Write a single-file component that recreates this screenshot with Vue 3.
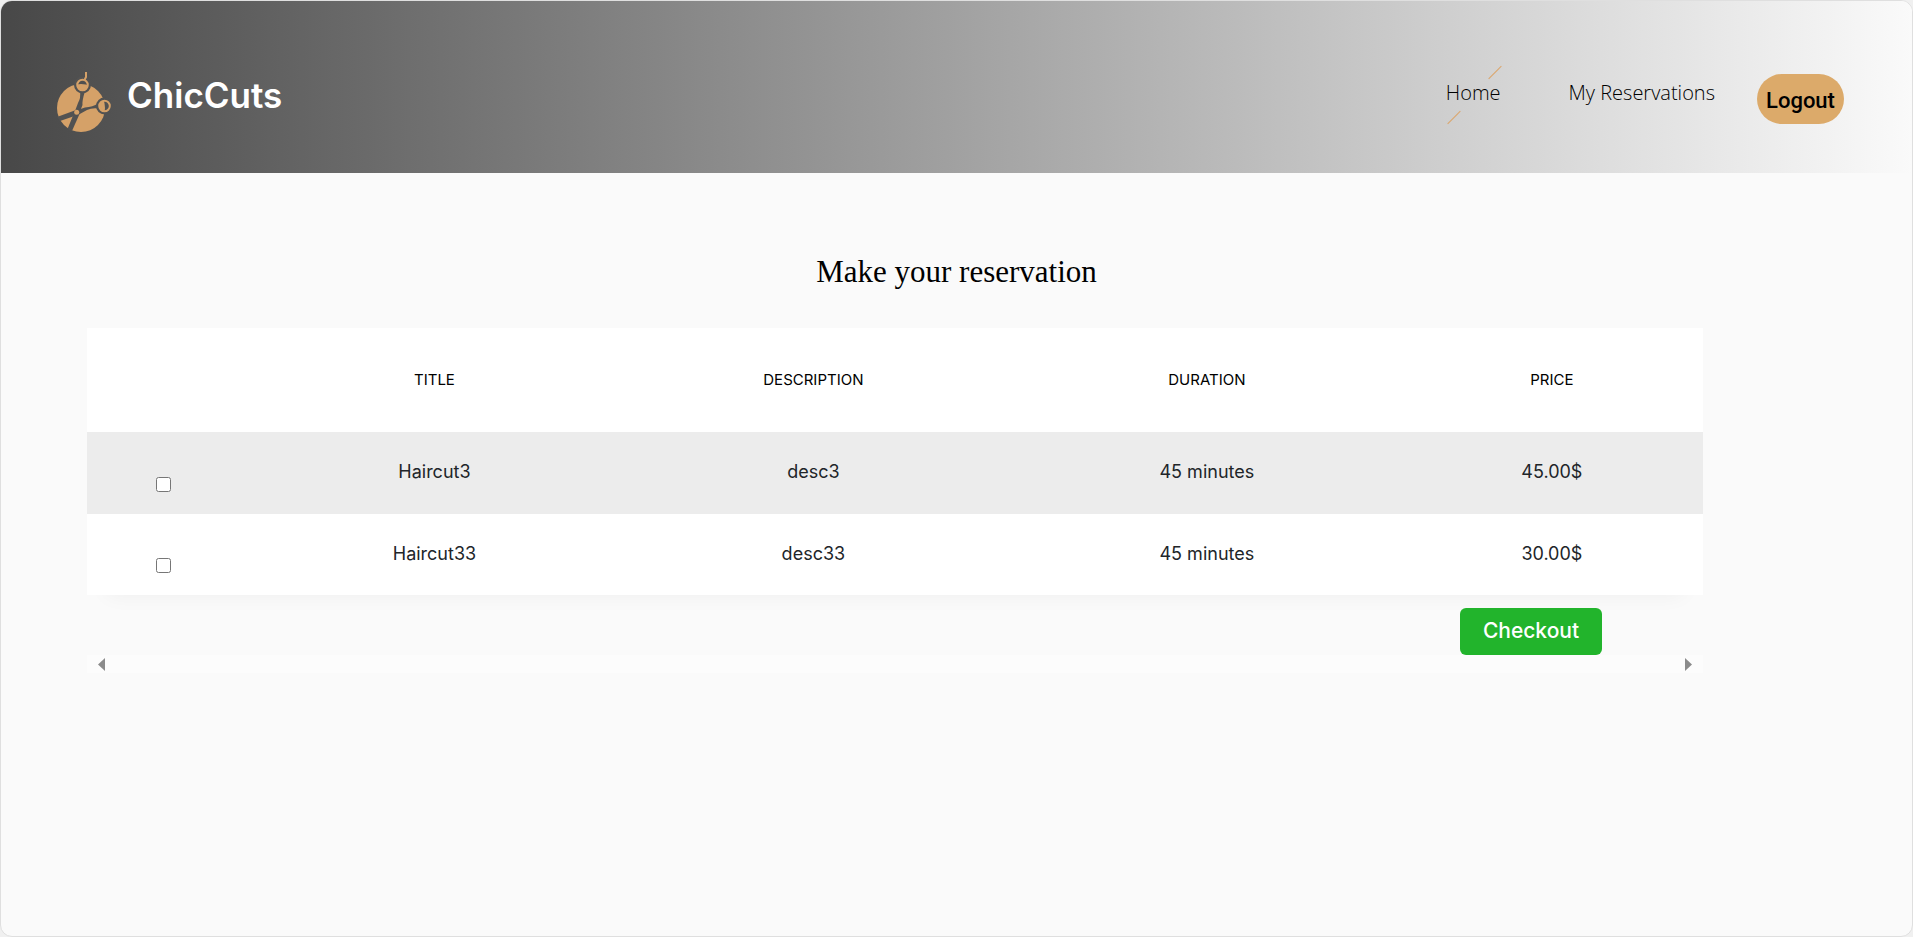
<script setup>
import { ref } from 'vue'

const services = ref([
  { id: 3, title: 'Haircut3', description: 'desc3', duration: '45 minutes', price: '45.00$', selected: false },
  { id: 33, title: 'Haircut33', description: 'desc33', duration: '45 minutes', price: '30.00$', selected: false },
])
</script>

<template>
  <div class="page">
    <header class="header">
      <a class="brand" href="#">
        <svg class="logo" viewBox="0 0 54 60" aria-hidden="true">
          <circle cx="24" cy="36" r="24" fill="#d5a168" />
          <g fill="#525252">
            <path d="M23 19 L28 19 Q25 29 25.500 33 L22 42 L18 39 L21 31 Q24 26 23 19 Z" />
            <path d="M41 31.500 L42 36.500 Q35 35.500 30 38 L21 43 L19 38.500 L28 35.500 Q36 35 41 31.500 Z" />
            <path d="M17.500 40 L22.500 42 L15 59 L10.500 57 Z" />
            <path d="M19 38 L20.500 43 L3 49 L0 45 Z" />
          </g>
          <g fill="none" stroke="#525252" stroke-width="3">
            <circle cx="25.500" cy="13" r="7" />
            <circle cx="47.500" cy="34" r="7" />
          </g>
          <circle cx="19.700" cy="40.300" r="2.500" fill="#d5a168" />
          <g fill="none" stroke="#d5a168" stroke-width="2">
            <circle cx="25.500" cy="13" r="5.300" />
            <circle cx="47.500" cy="34" r="5.300" />
            <path d="M27.500 8 L29 5 L29 0" />
          </g>
        </svg>
        <span class="brand-name">ChicCuts</span>
      </a>
      <nav class="nav">
        <a class="nav-link active" href="#">Home</a>
        <a class="nav-link" href="#">My Reservations</a>
        <button class="logout" type="button">Logout</button>
      </nav>
    </header>

    <main>
      <h1 class="title">Make your reservation</h1>
      <section class="reservation">
        <table class="services">
          <colgroup>
            <col class="col-check" /><col class="col-title" /><col class="col-description" />
            <col class="col-duration" /><col class="col-price" />
          </colgroup>
          <thead>
            <tr>
              <th></th>
              <th>TITLE</th>
              <th>DESCRIPTION</th>
              <th>DURATION</th>
              <th>PRICE</th>
            </tr>
          </thead>
          <tbody>
            <tr v-for="s in services" :key="s.id">
              <td class="check"><input v-model="s.selected" type="checkbox" :aria-label="s.title" /></td>
              <td>{{ s.title }}</td>
              <td>{{ s.description }}</td>
              <td>{{ s.duration }}</td>
              <td>{{ s.price }}</td>
            </tr>
          </tbody>
        </table>
        <div class="actions">
          <button class="checkout" type="button">Checkout</button>
        </div>
        <div class="scroll-track" aria-hidden="true">
          <svg viewBox="0 0 7 13"><path d="M7 0 V13 L0 6.500 Z" fill="#8b8b8b" /></svg>
          <svg viewBox="0 0 7 13"><path d="M0 0 V13 L7 6.500 Z" fill="#8b8b8b" /></svg>
        </div>
      </section>
    </main>
  </div>
</template>

<style>
body {
  background: #f0f0f0;
}
</style>

<style scoped>
.page {
  box-sizing: border-box;
  min-height: 100vh;
  border: 1px solid #dfdfdf;
  border-radius: 12px;
  overflow: hidden;
  background: #fafafa;
  font-family: Inter, "Open Sans", sans-serif;
}
.header {
  box-sizing: border-box;
  height: 172px;
  display: flex;
  justify-content: space-between;
  align-items: flex-start;
  padding: 71px 68px 0 56px;
  background: linear-gradient(to right, #484848, #fafafa);
}
.brand {
  display: flex;
  gap: 16px;
  text-decoration: none;
}
.logo {
  width: 54px;
  height: 60px;
}
.brand-name {
  color: #fff;
  font-size: 35px;
  font-weight: 600;
  line-height: 46px;
}
.nav {
  display: flex;
  align-items: flex-start;
}
.nav-link {
  position: relative;
  margin-right: 68px;
  color: #000;
  font: 300 20px/42px "Open Sans", sans-serif;
  text-decoration: none;
}
.nav-link + .nav-link {
  margin-right: 42px;
}
.active::before,
.active::after {
  content: "";
  position: absolute;
  width: 18px;
  height: 1px;
  background: #dba56a;
  transform: rotate(-45deg);
}
.active::before {
  top: 0;
  right: -3px;
}
.active::after {
  bottom: -4px;
  left: -1px;
}
.logout {
  width: 87px;
  height: 50px;
  margin-top: 2px;
  padding: 4px 0 0;
  border: 0;
  border-radius: 25px;
  background: #dcaa6a;
  color: #000;
  font: 500 22px/40px Roboto, sans-serif;
}
.title {
  margin: 79px 0 37px;
  color: #000;
  font: 400 31px/39px "Liberation Serif", serif;
  text-align: center;
}
.reservation {
  margin: 0 209px 0 86px;
}
.services {
  width: 100%;
  table-layout: fixed;
  border-collapse: collapse;
  background: #fff;
  box-shadow: 0 20px 20px -20px rgba(0, 0, 0, 0.05);
}
.col-check { width: 10.4%; }
.col-title { width: 22.2%; }
.col-description { width: 24.7%; }
.col-duration { width: 24%; }
.col-price { width: 18.7%; }
th {
  height: 102px;
  padding: 0 0 2px;
  color: #000;
  font-size: 15px;
  font-weight: 400;
}
td {
  box-sizing: border-box;
  height: 82px;
  padding: 0 0 2px;
  color: #212529;
  font-size: 18px;
  line-height: 24px;
  text-align: center;
}
tbody tr:nth-child(odd) {
  background: #ececec;
}
tbody tr:last-child td {
  height: 81px;
}
.check {
  padding: 22px 15px 0 0;
  line-height: 0;
}
.check input {
  width: 15px;
  height: 15px;
  margin: 0;
}
.actions {
  display: flex;
  justify-content: flex-end;
  padding: 13px 101px 0 0;
}
.checkout {
  width: 142px;
  height: 47px;
  padding: 0 0 2px;
  border: 0;
  border-radius: 6px;
  background: #22b42c;
  color: #fff;
  font: 500 21px/30px Inter, sans-serif;
}
.scroll-track {
  display: flex;
  justify-content: space-between;
  padding: 3px 11px 2px;
  background: #fcfcfc;
}
.scroll-track svg {
  width: 7px;
  height: 13px;
}
</style>
